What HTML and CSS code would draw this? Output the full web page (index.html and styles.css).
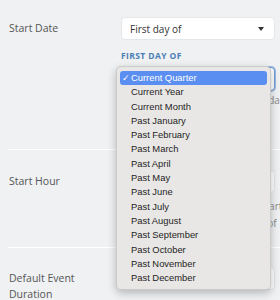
FILE: index.html
```html
<!DOCTYPE html>
<html lang="en">
<head>
    <meta charset="UTF-8">
    <title>Calendar Settings</title>
    <link rel="stylesheet" href="styles.css">
</head>
<body>
    <div class="settings">
        <div class="setting-row first">
            <div class="setting-label">Start Date</div>
            <div class="setting-field">
                <div class="select-box">
                    <span>First day of</span>
                    <span class="caret"></span>
                </div>
                <div class="sub-label">First day of</div>
                <div class="select-box focused"></div>
                <p class="help-text">
                    <span>The first day shown in the calendar</span>
                    <span>starts the period, as you like</span>
                </p>
            </div>
        </div>

        <div class="setting-row second">
            <div class="setting-label">Start Hour</div>
            <div class="setting-field">
                <div class="select-box"></div>
                <p class="help-text spaced">
                    <span>The hour the day view should start</span>
                    <span>at, shown at the top of the grid of</span>
                </p>
            </div>
        </div>

        <div class="setting-row third">
            <div class="setting-label">Default Event Duration</div>
            <div class="setting-field">
                <div class="select-box"></div>
            </div>
        </div>

        <ul class="dropdown-menu">
            <li class="selected">Current Quarter</li>
            <li>Current Year</li>
            <li>Current Month</li>
            <li>Past January</li>
            <li>Past February</li>
            <li>Past March</li>
            <li>Past April</li>
            <li>Past May</li>
            <li>Past June</li>
            <li>Past July</li>
            <li>Past August</li>
            <li>Past September</li>
            <li>Past October</li>
            <li>Past November</li>
            <li>Past December</li>
        </ul>
    </div>
</body>
</html>
```

FILE: styles.css
```css
body {
    font-family: "Open Sans", "Liberation Sans", sans-serif;
    margin: 0;
    background-color: #eff1f3;
    color: #555;
    overflow: hidden;
}
.settings {
    position: relative;
    padding-left: 8px;
    height: 300px;
}
.setting-row {
    display: grid;
    grid-template-columns: 113px 154px;
    align-items: start;
    border-bottom: 1px solid #fff;
    box-sizing: border-box;
}
.setting-row.first {
    height: 150px;
    padding-top: 17px;
}
.setting-row.second {
    height: 98px;
    padding-top: 20px;
}
.setting-row.third {
    padding-top: 19px;
}
.setting-label {
    font-size: 10.5px;
    line-height: 16px;
    padding: 3px 0 0 1px;
    width: 80px;
}
.select-box {
    height: 21px;
    background: white;
    border: 1px solid #e4e7ea;
    border-radius: 4px;
    display: flex;
    align-items: center;
    justify-content: space-between;
    padding: 0 10px 0 8px;
    font-size: 10px;
    color: #333;
}
.select-box.focused {
    height: 22px;
    border-color: #6f9bd0;
    box-shadow: 0 0 0 1px #9bbce4;
}
.caret {
    width: 0;
    height: 0;
    border-left: 3px solid transparent;
    border-right: 3px solid transparent;
    border-top: 4px solid #333;
}
.sub-label {
    font-size: 8.5px;
    font-weight: bold;
    text-transform: uppercase;
    letter-spacing: 0.4px;
    color: #4a7fb5;
    margin: 10px 0 6px 0;
}
.help-text {
    margin: 1px 0 0 0;
    font-size: 10px;
    line-height: 16px;
    color: #8a8a8a;
    white-space: nowrap;
}
.help-text.spaced {
    margin-top: 5px;
    line-height: 17px;
}
.help-text span {
    display: block;
}
.dropdown-menu {
    position: absolute;
    top: 66px;
    left: 116px;
    width: 155px;
    box-sizing: border-box;
    margin: 0;
    padding: 4px 3px;
    list-style: none;
    background: #e8e7e5;
    border: 1px solid rgba(0, 0, 0, 0.12);
    border-radius: 5px;
    box-shadow: 0 3px 8px rgba(0, 0, 0, 0.25);
    font-family: "Liberation Sans", Arial, sans-serif;
    font-size: 9.4px;
    color: #1e1e1e;
}
.dropdown-menu li {
    height: 14.3px;
    line-height: 14.3px;
    padding-left: 11px;
    border-radius: 3px;
}
.dropdown-menu li.selected {
    position: relative;
    background: #5b8ef1;
    color: white;
}
.dropdown-menu li.selected:before {
    content: "✓";
    position: absolute;
    left: 2px;
}
```
